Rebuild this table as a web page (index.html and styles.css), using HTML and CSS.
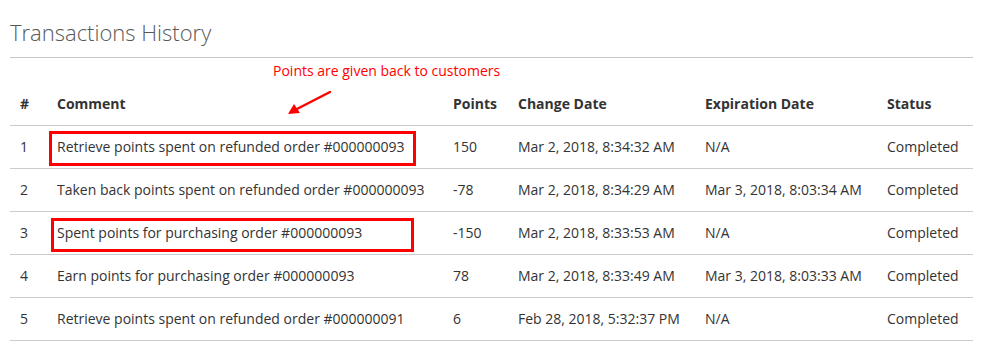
FILE: index.html
```html
<!DOCTYPE html>
<html>
<head>
<meta charset="utf-8">
<link rel="stylesheet" href="styles.css">
</head>
<body>
<div class="block">
  <div class="block-title"><strong>Transactions History</strong></div>
  <div class="table-wrap">
    <table class="data-table">
      <colgroup>
        <col class="c-id"><col class="c-comment"><col class="c-points"><col class="c-change"><col class="c-exp"><col class="c-status">
      </colgroup>
      <thead>
        <tr><th>#</th><th>Comment</th><th>Points</th><th>Change Date</th><th>Expiration Date</th><th>Status</th></tr>
      </thead>
      <tbody>
        <tr><td>1</td><td>Retrieve points spent on refunded order #000000093</td><td>150</td><td>Mar 2, 2018, 8:34:32 AM</td><td>N/A</td><td>Completed</td></tr>
        <tr><td>2</td><td>Taken back points spent on refunded order #000000093</td><td>-78</td><td>Mar 2, 2018, 8:34:29 AM</td><td>Mar 3, 2018, 8:03:34 AM</td><td>Completed</td></tr>
        <tr><td>3</td><td>Spent points for purchasing order #000000093</td><td>-150</td><td>Mar 2, 2018, 8:33:53 AM</td><td>N/A</td><td>Completed</td></tr>
        <tr><td>4</td><td>Earn points for purchasing order #000000093</td><td>78</td><td>Mar 2, 2018, 8:33:49 AM</td><td>Mar 3, 2018, 8:03:33 AM</td><td>Completed</td></tr>
        <tr><td>5</td><td>Retrieve points spent on refunded order #000000091</td><td>6</td><td>Feb 28, 2018, 5:32:37 PM</td><td>N/A</td><td>Completed</td></tr>
      </tbody>
    </table>
    <div class="note">Points are given back to customers</div>
    <svg class="arrow" width="50" height="30" viewBox="0 0 50 30">
      <line x1="45" y1="3" x2="10" y2="21" stroke="#ff0000" stroke-width="2.5" stroke-linecap="round"/>
      <polygon points="3,25 9,15 15,24" fill="#ff0000"/>
    </svg>
    <div class="mark mark-1"></div>
    <div class="mark mark-2"></div>
  </div>
</div>
</body>
</html>
```

FILE: styles.css
```css
html, body {
  margin: 0;
  padding: 0;
  background: #ffffff;
}
body {
  font-family: "Open Sans", "Helvetica Neue", Arial, sans-serif;
  color: #333333;
  font-size: 14px;
  line-height: 1.42857;
}
.block {
  width: 963px;
  margin-left: 10px;
}
.block-title {
  border-bottom: 1px solid #c6c6c6;
  padding-top: 17px;
  padding-bottom: 10px;
  margin-bottom: 25px;
}
.block-title strong {
  display: block;
  font-size: 22px;
  font-weight: 300;
  line-height: 30px;
  color: #575757;
}
.table-wrap {
  position: relative;
}
.data-table {
  width: 100%;
  border-collapse: collapse;
  table-layout: fixed;
}
.c-id { width: 37px; }
.c-comment { width: 396px; }
.c-points { width: 65px; }
.c-change { width: 187px; }
.c-exp { width: 182px; }
.c-status { width: 96px; }
.data-table th,
.data-table td {
  padding: 11px 10px;
  text-align: left;
  vertical-align: top;
  white-space: nowrap;
  line-height: 20px;
}
.data-table th {
  font-weight: 700;
  border-bottom: 1px solid #cccccc;
}
.data-table td {
  border-bottom: 1px solid #cccccc;
}
.note {
  position: absolute;
  left: 263px;
  top: -21px;
  color: #ff0000;
  font-size: 14px;
  line-height: 18px;
  white-space: nowrap;
}
.arrow {
  position: absolute;
  left: 275px;
  top: 6px;
}
.mark {
  position: absolute;
  border: 3px solid #ff0000;
  box-sizing: border-box;
}
.mark-1 {
  left: 39px;
  top: 48px;
  width: 367px;
  height: 35px;
}
.mark-2 {
  left: 41px;
  top: 135px;
  width: 363px;
  height: 34px;
}
```
